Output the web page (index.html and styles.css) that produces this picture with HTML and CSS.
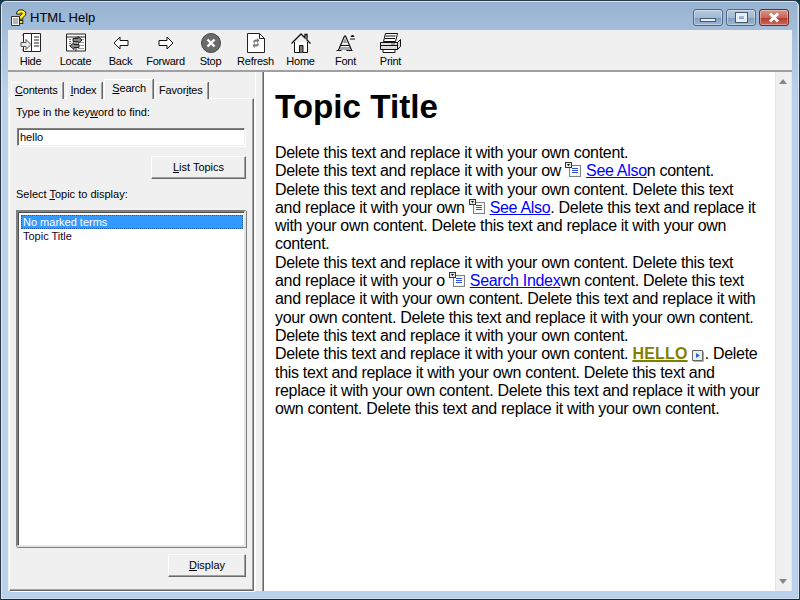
FILE: index.html
```html
<!DOCTYPE html>
<html lang="en">
<head>
  <meta charset="UTF-8" />
  <title>HTML Help</title>
  <link rel="stylesheet" href="styles.css">
</head>
<body>
  <svg class="defs" width="0" height="0">
    <symbol id="topic-icon" viewBox="0 0 16 15">
      <rect x="4.5" y="3.5" width="11" height="11" fill="#f4f4f4" stroke="#808080"/>
      <rect x="6" y="5" width="8" height="8" fill="#fff"/>
      <path d="M7 6.500h6M7 8.500h6M7 10.500h6" stroke="#2a4fd0"/>
      <rect x="0.5" y="0.5" width="6" height="5" fill="#e8e8e8" stroke="#333"/>
      <path d="M2 2h3L3.500 4z" fill="#000"/>
    </symbol>
  </svg>

  <div class="window">
    <header class="titlebar">
      <svg class="app-icon" width="17" height="18" viewBox="0 0 17 18">
        <path d="M1.500 7.500h8v9h-8z" fill="#f4f4f4" stroke="#333"/>
        <path d="M3 10h5M3 12h5M3 14h5" stroke="#777"/>
        <path d="M6.500 5C6.500 2 8.500 .8 11 .8s4.800 1.400 4.800 3.900c0 2.200-2 3-3 3.800v1.700H9.500V7.600c0-1.400 2.800-2 2.800-3 0-1-2.300-.8-2.500.6z" fill="#ffe92e" stroke="#222"/>
        <rect x="9.500" y="11.500" width="3.300" height="3" fill="#ffe92e" stroke="#222"/>
      </svg>
      <span class="app-title">HTML Help</span>
      <div class="win-buttons">
        <div class="win-btn"><span class="glyph-min"></span></div>
        <div class="win-btn"><span class="glyph-max"></span></div>
        <div class="win-btn win-close">
          <svg width="14" height="11" viewBox="0 0 14 11"><path d="M3 1.500l8 8M11 1.500l-8 8" fill="none" stroke="#fff" stroke-width="3"/></svg>
        </div>
      </div>
    </header>

    <nav class="toolbar">
      <div class="tool">
        <svg width="22" height="20" viewBox="0 0 22 20">
          <path d="M3.500 .5h17v18h-17z" fill="#fff" stroke="#222"/>
          <path d="M11.500 .5v18" stroke="#222"/>
          <path d="M14 4h5M14 7h5M14 10h5M14 13h5" stroke="#222"/>
          <path d="M1 9.500h5v-3l5 5-5 5v-3H1z" fill="#e8e8e8" stroke="#555"/>
          <path d="M2 2h1M2 17h1" stroke="#c33"/>
        </svg>
        <span>Hide</span>
      </div>
      <div class="tool">
        <svg width="20" height="19" viewBox="0 0 20 19">
          <path d="M.5 .5h19v17H.5z" fill="#fff" stroke="#222"/>
          <path d="M.5 3.500h19M10 3.500v14" stroke="#222"/>
          <path d="M12 6h6M12 9h6M12 12h6M12 15h6" stroke="#999"/>
          <path d="M3 6h2M3 8h2M3 10h2M3 12h2" stroke="#777"/>
          <path d="M7 5h5V3l4 3.500-4 3.500V8H7z" fill="#888" stroke="#222"/>
          <path d="M13 11H8V9l-4 3.500L8 16v-2h5z" fill="#888" stroke="#222"/>
        </svg>
        <span>Locate</span>
      </div>
      <div class="tool">
        <svg width="16" height="14" viewBox="0 0 16 14">
          <path d="M1 7l6-6v3.500h8v5H7V13z" fill="#fff" stroke="#111"/>
        </svg>
        <span>Back</span>
      </div>
      <div class="tool">
        <svg width="16" height="14" viewBox="0 0 16 14">
          <path d="M15 7L9 1v3.500H1v5h8V13z" fill="#fff" stroke="#111"/>
        </svg>
        <span>Forward</span>
      </div>
      <div class="tool">
        <svg width="20" height="20" viewBox="0 0 20 20">
          <circle cx="10" cy="10" r="9.500" fill="#6b6b6b" stroke="#444"/>
          <path d="M6.500 6.500l7 7M13.500 6.500l-7 7" stroke="#fff" stroke-width="2.400"/>
        </svg>
        <span>Stop</span>
      </div>
      <div class="tool">
        <svg width="18" height="20" viewBox="0 0 18 20">
          <path d="M.5 .5h12l5 5v14H.5z" fill="#fff" stroke="#222"/>
          <path d="M12.500 .5v5h5" fill="none" stroke="#222"/>
          <path d="M6 9a3 3 0 0 1 3-2.500h1V5l2.500 2.500L10 10V8.500H9A1.500 1.500 0 0 0 7.500 10z" fill="#777"/>
          <path d="M12 11a3 3 0 0 1-3 2.500H8V15l-2.500-2.500L8 10v1.500h1a1.500 1.500 0 0 0 1.500-1.500z" fill="#777"/>
        </svg>
        <span>Refresh</span>
      </div>
      <div class="tool">
        <svg width="20" height="20" viewBox="0 0 20 20">
          <path d="M3.500 9v10.500h13V9" fill="#fff" stroke="#111"/>
          <path d="M.5 10.500L10 1l4 4V1.500h2v5.500l3.500 3.500" fill="none" stroke="#111" stroke-width="1.300"/>
          <path d="M8.500 19.500v-7h3.500v7" fill="#777" stroke="#111"/>
        </svg>
        <span>Home</span>
      </div>
      <div class="tool">
        <svg width="20" height="16" viewBox="0 0 20 16">
          <path d="M4 12h10v3H4z" fill="#aaa"/>
          <path d="M7 8l2-5 2 5z" fill="#999"/>
          <path d="M.5 15.500h5M10.500 15.500h6M2.500 15L8.500 1h1l6 14M5 10.500h8" fill="none" stroke="#111" stroke-width="1.200"/>
          <path d="M14 4h5M15 1.500L16.500 0 18 1.500z" stroke="#111"/>
        </svg>
        <span>Font</span>
      </div>
      <div class="tool">
        <svg width="21" height="20" viewBox="0 0 21 20">
          <path d="M5.500 .5h12l-2 8h-12z" fill="#fff" stroke="#111"/>
          <path d="M5.500 3h10M5 5.500h10" stroke="#111"/>
          <path d="M.5 9.500h17l3-3v7l-3 3H.5z" fill="#ddd" stroke="#111"/>
          <path d="M.5 12.500h17M17.500 9.500v7" stroke="#111"/>
          <path d="M3 16.500h12v3H3z" fill="#fff" stroke="#111"/>
          <path d="M11 11h4" stroke="#666"/>
        </svg>
        <span>Print</span>
      </div>
    </nav>

    <div class="panes">
      <aside class="nav-pane">
        <div class="tabs">
          <div class="tab"><u>C</u>ontents</div>
          <div class="tab"><u>I</u>ndex</div>
          <div class="tab tab-active"><u>S</u>earch</div>
          <div class="tab">Favor<u>i</u>tes</div>
        </div>
        <div class="tab-panel">
          <label class="field-label">Type in the key<u>w</u>ord to find:</label>
          <div class="text-input">hello</div>
          <div class="btn-row">
            <div class="btn btn-list"><u>L</u>ist Topics</div>
          </div>
          <label class="field-label select-label">Select <u>T</u>opic to display:</label>
          <div class="listbox">
            <div class="list-item list-selected">No marked terms</div>
            <div class="list-item">Topic Title</div>
          </div>
          <div class="btn-row">
            <div class="btn btn-display"><u>D</u>isplay</div>
          </div>
        </div>
      </aside>

      <div class="splitter"></div>

      <main class="content-pane">
        <article class="doc">
          <h1>Topic Title</h1>
          <p>
            Delete this text and replace it with your own content.<br>
            Delete this text and replace it with your ow<svg class="topic-icon"><use href="#topic-icon"/></svg><a href="#">See Also</a>n content.<br>
            Delete this text and replace it with your own content. Delete this text and replace it with your own<svg class="topic-icon"><use href="#topic-icon"/></svg><a href="#">See Also</a>. Delete this text and replace it with your own content. Delete this text and replace it with your own content.<br>
            Delete this text and replace it with your own content. Delete this text and replace it with your o<svg class="topic-icon"><use href="#topic-icon"/></svg><a href="#">Search Index</a>wn content. Delete this text and replace it with your own content. Delete this text and replace it with your own content. Delete this text and replace it with your own content.<br>
            Delete this text and replace it with your own content.<br>
            Delete this text and replace it with your own content. <a class="hit" href="#">HELLO</a>
            <svg class="next-icon" width="13" height="12" viewBox="0 0 13 12"><path d="M.5 .5h10v10H.5z" fill="#eee" stroke="#666"/><path d="M1.500 11.500h10v-10" fill="none" stroke="#aaa"/><path d="M4 3l4 2.500L4 8z" fill="#1c6fd8"/></svg>. Delete this text and replace it with your own content. Delete this text and replace it with your own content. Delete this text and replace it with your own content. Delete this text and replace it with your own content.
          </p>
        </article>
        <div class="scrollbar">
          <span class="arrow-up"></span>
          <span class="arrow-down"></span>
        </div>
      </main>
    </div>
  </div>
</body>
</html>
```

FILE: styles.css
```css
html, body {
  margin: 0;
  height: 100%;
  overflow: hidden;
  background: #0d3a4a;
}

u {
  text-decoration: underline;
  text-underline-offset: 1px;
}

.defs {
  display: block;
  height: 0;
}

.window {
  box-sizing: border-box;
  width: 800px;
  height: 600px;
  display: flex;
  flex-direction: column;
  padding: 0 8px 8px;
  border: 1px solid #2c3a46;
  border-bottom-color: #0b2f3a;
  border-radius: 6px 6px 0 0;
  background: linear-gradient(#97b2d0 0, #a9c3de 40px, #b9d1ea 90px);
  box-shadow: inset 0 0 0 1px #d8e6f3, inset -1px -1px 0 1px #7fe0f0;
  font: 11px "Liberation Sans", Arial, sans-serif;
  color: #000;
}

/* title bar */
.titlebar {
  height: 29px;
  display: flex;
  align-items: center;
  flex-shrink: 0;
  padding-top: 4px;
  box-sizing: border-box;
}

.app-icon {
  margin-left: 1px;
}

.app-title {
  margin-left: 3px;
  font: 13px "Liberation Sans", Arial, sans-serif;
  color: #000;
}

.win-buttons {
  margin-left: auto;
  margin-right: 2px;
  margin-top: 0;
  display: flex;
  gap: 3px;
}

.win-btn {
  box-sizing: border-box;
  width: 30px;
  height: 17px;
  display: flex;
  align-items: center;
  justify-content: center;
  border: 1px solid #4e6a86;
  border-radius: 3px;
  background: linear-gradient(#b4c9df 0, #a2bbd5 50%, #7f9dbd 52%, #9db8d3 100%);
  box-shadow: inset 0 0 0 1px rgba(255, 255, 255, 0.35);
}

.win-close {
  border-color: #6e2a22;
  background: linear-gradient(#d99488 0, #c9675a 50%, #b23a2c 52%, #c9685a 100%);
}

.glyph-min {
  display: block;
  width: 14px;
  height: 2px;
  margin-top: 5px;
  background: #e8eef5;
  border: 1px solid #45586c;
}

.glyph-max {
  display: block;
  box-sizing: border-box;
  width: 11px;
  height: 9px;
  border: 3px solid #e8eef5;
  outline: 1px solid #45586c;
}

/* toolbar */
.toolbar {
  height: 42px;
  flex-shrink: 0;
  display: flex;
  margin: 0 -1px;
  background: #f0f0f0;
  box-sizing: border-box;
  border-bottom: 2px solid #a0a0a0;
}

.tool {
  width: 45px;
  height: 38px;
  display: flex;
  flex-direction: column;
  align-items: center;
  padding-top: 3px;
  box-sizing: border-box;
  position: relative;
}

.tool svg {
  height: 20px;
  overflow: visible;
}

.tool span {
  position: absolute;
  top: 24px;
  left: -5px;
  right: -5px;
  text-align: center;
  line-height: 14px;
  letter-spacing: -0.25px;
  color: #000;
}

/* panes */
.panes {
  flex: 1;
  min-height: 0;
  display: flex;
  margin: 0 -1px;
  background: #f0f0f0;
}

.nav-pane {
  width: 246px;
  display: flex;
  flex-direction: column;
  flex-shrink: 0;
  padding-top: 8px;
  box-sizing: border-box;
}

.tabs {
  display: flex;
  height: 19px;
  align-items: flex-end;
  padding-left: 3px;
  gap: 3px;
  position: relative;
  z-index: 1;
  margin-bottom: -1px;
  letter-spacing: -0.2px;
}

.tab {
  box-sizing: border-box;
  height: 17px;
  line-height: 15px;
  padding: 0 5px 0 3px;
  background: #f0f0f0;
  border: 1px solid #a0a0a0;
  border-bottom: none;
  border-left-color: #fff;
  border-top-color: #fff;
  box-shadow: 1px 0 0 #696969;
  white-space: nowrap;
}

.tab-active {
  height: 20px;
  padding: 1px 6px 2px 7px;
  margin: 0 -1px;
  background: #f0f0f0;
}

.tab-panel {
  flex: 1;
  min-height: 0;
  display: flex;
  flex-direction: column;
  box-sizing: border-box;
  margin-left: 1px;
  padding: 6px 7px 13px 6px;
  border: 1px solid;
  border-color: #fff #696969 #696969 #fff;
  box-shadow: 1px 1px 0 #fff, inset -1px -1px 0 #a0a0a0;
}

.field-label {
  display: block;
  line-height: 14px;
}

.text-input {
  box-sizing: border-box;
  width: 228px;
  height: 18px;
  margin: 9px 0 10px 1px;
  padding-left: 2px;
  line-height: 16px;
  background: #fff;
  border: 1px solid;
  border-color: #808080 #f0f0f0 #f0f0f0 #808080;
  box-shadow: inset 1px 1px 0 #696969, 1px 1px 0 #fff;
}

.btn-row {
  display: flex;
  justify-content: flex-end;
}

.btn {
  box-sizing: border-box;
  height: 23px;
  line-height: 21px;
  text-align: center;
  background: #f0f0f0;
  border: 1px solid;
  border-color: #fff #696969 #696969 #fff;
  box-shadow: inset -1px -1px 0 #a0a0a0;
}

.btn-list {
  width: 95px;
}

.btn-display {
  width: 78px;
}

.select-label {
  margin-top: 8px;
}

.listbox {
  flex: 1;
  min-height: 0;
  box-sizing: border-box;
  margin: 9px 0 7px;
  padding: 3px 1px 3px 3px;
  background: #fff;
  border: 2px solid;
  border-color: #808080 #e4e4e4 #e4e4e4 #808080;
  box-shadow: inset 1px 1px 0 #505050, 1px 1px 0 #808080;
}

.list-item {
  height: 14px;
  line-height: 14px;
  padding-left: 2px;
  color: #1a0030;
}

.list-selected {
  background: #3399ff;
  color: #fff;
  outline: 1px dotted #1a5fa8;
  outline-offset: -1px;
}

.splitter {
  width: 8px;
  flex-shrink: 0;
  box-sizing: border-box;
  margin-left: 1px;
  border-left: 1px solid #fff;
  border-right: 1px solid #a0a0a0;
  background: #f0f0f0;
}

.content-pane {
  flex: 1;
  min-width: 0;
  display: flex;
  background: #fff;
  border-left: 1px solid #696969;
}

.doc {
  flex: 1;
  min-width: 0;
  overflow: hidden;
  padding: 0 12px 0 11px;
  font: 16px/18.3px "Liberation Sans", Arial, sans-serif;
  letter-spacing: -0.31px;
  color: #000;
}

.doc h1 {
  font: bold 33.2px/37px "Liberation Sans", Arial, sans-serif;
  letter-spacing: 0;
  margin: 16px 0 19px;
}

.doc p {
  margin: 0;
}

.doc a {
  color: #0000ff;
}

.doc a.hit {
  color: #808000;
  font-weight: bold;
  letter-spacing: 0.2px;
  text-decoration-thickness: 2px;
}

.topic-icon {
  width: 16px;
  height: 15px;
  margin: -4px 5px -2px 4px;
  vertical-align: 1px;
}

.next-icon {
  margin: -4px 0;
  vertical-align: 1px;
}

.scrollbar {
  width: 17px;
  flex-shrink: 0;
  box-sizing: border-box;
  position: relative;
  background: #f0f0f0;
  border-left: 1px solid #e6e6e6;
  border-right: 1px solid #e6e6e6;
}

.arrow-up,
.arrow-down {
  position: absolute;
  left: 3px;
  width: 0;
  height: 0;
  border-left: 4px solid transparent;
  border-right: 4px solid transparent;
}

.arrow-up {
  top: 7px;
  border-bottom: 5px solid #888;
}

.arrow-down {
  bottom: 7px;
  border-top: 5px solid #888;
}
```
